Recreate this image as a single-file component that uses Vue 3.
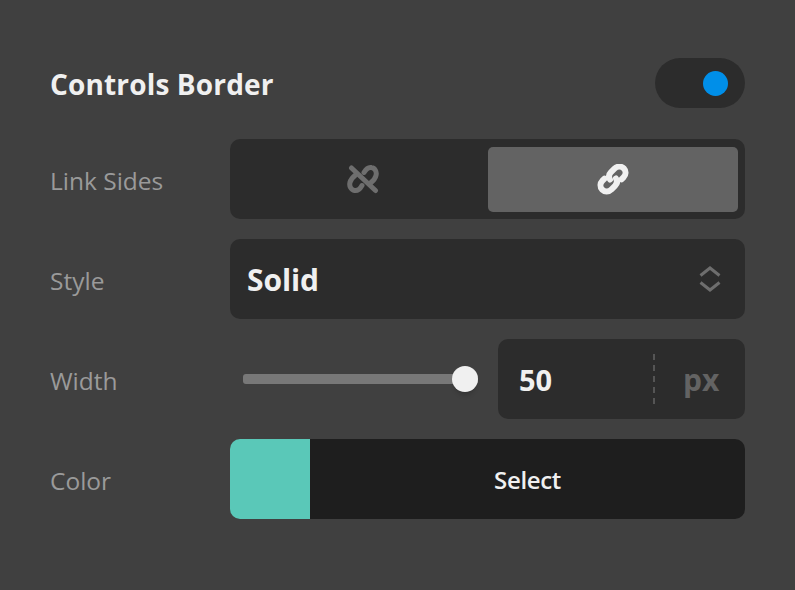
<script setup>
const rows = { width: 50 }
</script>

<template>
  <div class="panel">
    <div class="header">
      <h2 class="title">Controls Border</h2>
      <div class="toggle"><span class="toggle-dot" /></div>
    </div>

    <div class="row">
      <label class="label">Link Sides</label>
      <div class="segmented">
        <button class="seg-btn">
          <svg class="seg-icon" viewBox="0 1 32 32" fill="none" stroke="#6e6e6e" stroke-width="5" stroke-linecap="round">
            <path d="M17 9.500C19 6 22 4 24.500 4.500C28 5 30 9 29 12.500C28.500 15 26 18 23.500 20" />
            <path d="M15 22.500C13 26 10 28 7.500 27.500C4 27 2 23 3 19.500C3.500 17 6 14 8.500 12" />
            <path d="M4.500 5 28.500 27.500" />
          </svg>
        </button>
        <button class="seg-btn active">
          <svg class="seg-icon" viewBox="0 1 32 32" fill="none" stroke="#f0f0f0" stroke-width="6" stroke-linecap="round">
            <path d="M13 16.500c-1.800-2.800-.9-5.400 1-7.300l3.500-3.500c2.800-2.800 7-2.700 9.300-.3 2.400 2.500 2.300 6.300-.3 9l-2 2" />
            <path d="M19 15.500c1.800 2.800.9 5.400-1 7.300l-3.500 3.500c-2.800 2.800-7 2.700-9.300.3-2.400-2.500-2.300-6.300.3-9l2-2" />
          </svg>
        </button>
      </div>
    </div>

    <div class="row">
      <label class="label">Style</label>
      <div class="select">
        <span class="select-value">Solid</span>
        <svg class="chevrons" viewBox="0 0 22 28" fill="none" stroke="#6e6e6e" stroke-width="3">
          <path d="M1.500 10.500 11 3l9.500 7.500" />
          <path d="M1.500 17.500 11 25l9.500-7.500" />
        </svg>
      </div>
    </div>

    <div class="row">
      <label class="label">Width</label>
      <div class="width-control">
        <div class="slider">
          <div class="track" />
          <div class="thumb" />
        </div>
        <div class="number">
          <span class="number-value">{{ rows.width }}</span>
          <span class="unit">px</span>
        </div>
      </div>
    </div>

    <div class="row">
      <label class="label">Color</label>
      <div class="color">
        <span class="swatch" />
        <span class="color-btn">Select</span>
      </div>
    </div>
  </div>
</template>

<style>
html,
body {
  margin: 0;
  background: #404040;
}
</style>

<style scoped>
.panel {
  width: 795px;
  height: 590px;
  box-sizing: border-box;
  padding: 58px 50px 0;
  background: #404040;
  font-family: "Open Sans", "Noto Sans", sans-serif;
  display: flex;
  flex-direction: column;
  gap: 20px;
}

.header {
  display: flex;
  align-items: center;
  justify-content: space-between;
  height: 50px;
  margin-bottom: 11px;
}

.title {
  margin: 0;
  padding-top: 2px;
  font-size: 28px;
  font-weight: 700;
  letter-spacing: 0.15px;
  color: #f0f0f0;
}

.toggle {
  width: 90px;
  height: 50px;
  box-sizing: border-box;
  padding-right: 17px;
  border-radius: 25px;
  background: #2c2c2c;
  display: flex;
  align-items: center;
  justify-content: flex-end;
}

.toggle-dot {
  width: 25px;
  height: 25px;
  border-radius: 50%;
  background: #008fe9;
}

.row {
  display: flex;
  align-items: center;
  height: 80px;
}

.label {
  width: 180px;
  flex: none;
  padding-top: 2px;
  font-size: 24.5px;
  font-weight: 500;
  color: #9a9a9a;
}

.segmented {
  flex: 1;
  height: 80px;
  box-sizing: border-box;
  padding: 8px 7px 7px 8px;
  border-radius: 10px;
  background: #2c2c2c;
  display: flex;
}

.seg-btn {
  flex: 1;
  padding: 0;
  border: 0;
  border-radius: 5px;
  background: transparent;
  display: flex;
  align-items: center;
  justify-content: center;
}

.seg-btn.active {
  background: #636363;
}

.seg-icon {
  width: 32px;
  height: 32px;
}

.select {
  flex: 1;
  height: 80px;
  box-sizing: border-box;
  padding: 0 24px 0 17px;
  border-radius: 10px;
  background: #2c2c2c;
  display: flex;
  align-items: center;
  justify-content: space-between;
}

.select-value {
  font-size: 30px;
  font-weight: 700;
  letter-spacing: -0.1px;
  color: #f0f0f0;
}

.chevrons {
  width: 22px;
  height: 28px;
}

.width-control {
  flex: 1;
  display: flex;
  align-items: center;
  gap: 20px;
}

.slider {
  flex: 1;
  position: relative;
  margin-left: 13px;
  height: 26px;
  display: flex;
  align-items: center;
}

.track {
  width: 100%;
  height: 10px;
  border-radius: 3px;
  background: #787878;
}

.thumb {
  position: absolute;
  right: 0;
  top: 0;
  width: 26px;
  height: 26px;
  border-radius: 50%;
  background: #f0f0f0;
  box-shadow: 0 6px 5px -3px rgba(0, 0, 0, 0.2);
}

.number {
  width: 247px;
  height: 80px;
  box-sizing: border-box;
  padding-left: 21px;
  border-radius: 10px;
  background: #2c2c2c;
  display: flex;
  align-items: center;
}

.number-value {
  font-size: 29px;
  font-weight: 700;
  color: #f0f0f0;
  flex: 1;
}

.unit {
  width: 92px;
  box-sizing: border-box;
  padding-left: 28px;
  height: 50px;
  line-height: 52px;
  border-left: 2px dashed #555;
  font-size: 30px;
  font-weight: 700;
  color: #636363;
}

.color {
  flex: 1;
  height: 80px;
  border-radius: 10px;
  overflow: hidden;
  display: flex;
}

.swatch {
  width: 80px;
  flex: none;
  background: #5ac8b8;
}

.color-btn {
  flex: 1;
  background: #1e1e1e;
  color: #f0f0f0;
  font-size: 24px;
  font-weight: 600;
  letter-spacing: -0.35px;
  display: flex;
  align-items: center;
  justify-content: center;
}
</style>
